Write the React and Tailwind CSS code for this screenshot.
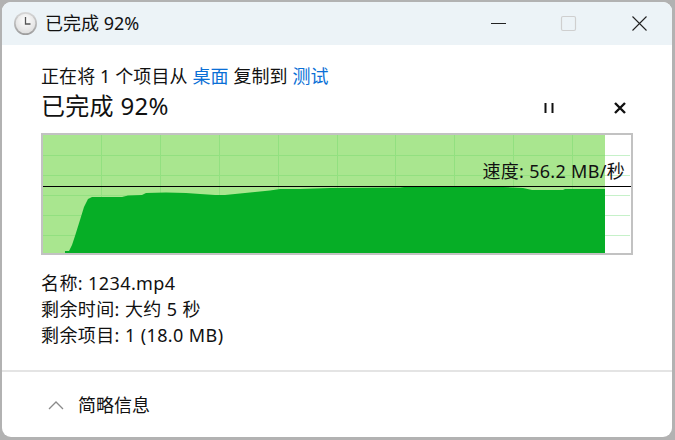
import React from 'react';

const chartTop = [
  [65, 253], [65, 251], [69, 251], [72, 245], [75, 236], [80, 220], [84, 207], [88, 199], [92, 197],
  [122, 197], [128, 195.5], [142, 195], [146, 193], [166, 192.5], [186, 193], [200, 194], [215, 195],
  [225, 195], [240, 193.5], [255, 192], [270, 190.5], [280, 189], [300, 189], [330, 188], [400, 187.5],
  [413, 186], [453, 186], [455, 187], [492, 186], [503, 187], [523, 188], [532, 190], [563, 190],
  [565, 189], [605, 189], [605, 253],
];

const vLines = [101.5, 160.5, 219.5, 278.5, 337.5, 395.5, 454.5, 513.5, 572.5];
const hLines = [155.5, 175.5, 195.5, 215.5, 235.5];

function ClockIcon() {
  return (
    <svg width="25" height="25" viewBox="0 0 25 25" className="shrink-0">
      <defs>
        <linearGradient id="rim" x1="0" y1="0" x2="0" y2="1">
          <stop offset="0" stopColor="#d8d8d8" />
          <stop offset="1" stopColor="#9c9c9c" />
        </linearGradient>
        <radialGradient id="face" cx="0.5" cy="0.35" r="0.7">
          <stop offset="0" stopColor="#ffffff" />
          <stop offset="1" stopColor="#dcdcdc" />
        </radialGradient>
      </defs>
      <circle cx="12.5" cy="12.5" r="11.5" fill="url(#rim)" />
      <circle cx="12.5" cy="12.5" r="9.8" fill="url(#face)" />
      <path d="M12.5 6v7h5" fill="none" stroke="#555" strokeWidth="1.3" />
    </svg>
  );
}

function SpeedChart() {
  return (
    <div className="relative h-[122px] border-2 border-[#c2c2c2] bg-white">
      <svg className="block h-[118px] w-full" viewBox="43 135 588 118" preserveAspectRatio="none">
        {hLines.map(y => (
          <line key={y} x1="605" x2="630" y1={y} y2={y} stroke="#c6f1c9" strokeWidth="1" />
        ))}
        <rect x="43" y="135" width="562" height="118" fill="#a9e68f" />
        {hLines.map(y => (
          <line key={y} x1="43" x2="605" y1={y} y2={y} stroke="#92e080" strokeWidth="1" />
        ))}
        {vLines.map(x => (
          <line key={x} x1={x} x2={x} y1="135" y2="253" stroke="#92e080" strokeWidth="1" />
        ))}
        <polygon points={chartTop.map(p => p.join(',')).join(' ')} fill="#06ae26" />
        <line x1="43" x2="631" y1="186.5" y2="186.5" stroke="#000" strokeWidth="1" />
      </svg>
      <span className="absolute right-[6px] top-[24px] text-[18px] leading-[24px] tracking-[0.3px] text-[#111]">速度: 56.2 MB/秒</span>
    </div>
  );
}

export default function App() {
  return (
    <div
      lang="zh-CN"
      className="h-[440px] w-[675px] overflow-hidden bg-[#b2b2b2] pb-[3px] pl-[2px] pr-[3px] pt-[2px] text-[#111] [font-family:'Noto_Sans','Noto_Sans_CJK_SC',sans-serif]"
    >
      <div className="flex h-full flex-col overflow-hidden rounded-[9px] bg-white">
        {/* title bar */}
        <div className="flex h-[43px] shrink-0 items-center bg-[#ecf3f7] pl-[11px]">
          <ClockIcon />
          <span className="mb-[2px] ml-[7px] text-[18px] leading-[24px]">已完成 92%</span>
          <div className="ml-auto flex items-center">
            <svg width="17" height="17" viewBox="0 0 17 17" className="mr-[53px]">
              <line x1="1" x2="16" y1="8.5" y2="8.5" stroke="#222" strokeWidth="1" />
            </svg>
            <svg width="17" height="17" viewBox="0 0 17 17" className="mr-[54px]">
              <rect x="1.5" y="1.5" width="14" height="14" rx="1.5" fill="none" stroke="#cfcfcf" strokeWidth="1.2" />
            </svg>
            <svg width="17" height="17" viewBox="0 0 17 17" className="mr-[24px]">
              <path d="M1.5 1.5l14 14M15.5 1.5l-14 14" fill="none" stroke="#222" strokeWidth="1.1" />
            </svg>
          </div>
        </div>

        {/* copy progress */}
        <div className="flex-1 pl-[39px] pr-[39px] pt-[19px]">
          <div className="text-[18px] leading-[24px] tracking-[0.1px]">
            正在将 1 个项目从 <span className="text-[#0a6fd6]">桌面</span> 复制到 <span className="text-[#0a6fd6]">测试</span>
          </div>
          <div className="flex h-[35px] items-center justify-between">
            <span className="text-[24px] leading-[32px] tracking-[0.3px]">已完成 92%</span>
            <div className="flex items-center pt-[5px]">
              <svg width="12" height="12" viewBox="0 0 12 12" className="mr-[58px]">
                <path d="M2.5 1v10M9.5 1v10" stroke="#111" strokeWidth="2" />
              </svg>
              <svg width="14" height="14" viewBox="0 0 14 14" className="mr-[6px]">
                <path d="M2 2l10 10M12 2L2 12" stroke="#111" strokeWidth="2.4" />
              </svg>
            </div>
          </div>
          <div className="mt-[10px]">
            <SpeedChart />
          </div>
          <div className="mt-[15px] text-[18px] leading-[26px] tracking-[0.4px]">
            <div>名称: 1234.mp4</div>
            <div>剩余时间: 大约 5 秒</div>
            <div>剩余项目: 1 (18.0 MB)</div>
          </div>
        </div>

        {/* footer */}
        <div className="flex h-[67px] shrink-0 items-center border-t-2 border-[#e4e4e4] pl-[46px]">
          <svg width="16" height="10" viewBox="0 0 16 10">
            <path d="M1 9l7-7 7 7" fill="none" stroke="#8a8a8a" strokeWidth="1.3" />
          </svg>
          <span className="ml-[14px] text-[18px] leading-[24px]">简略信息</span>
        </div>
      </div>
    </div>
  );
}
